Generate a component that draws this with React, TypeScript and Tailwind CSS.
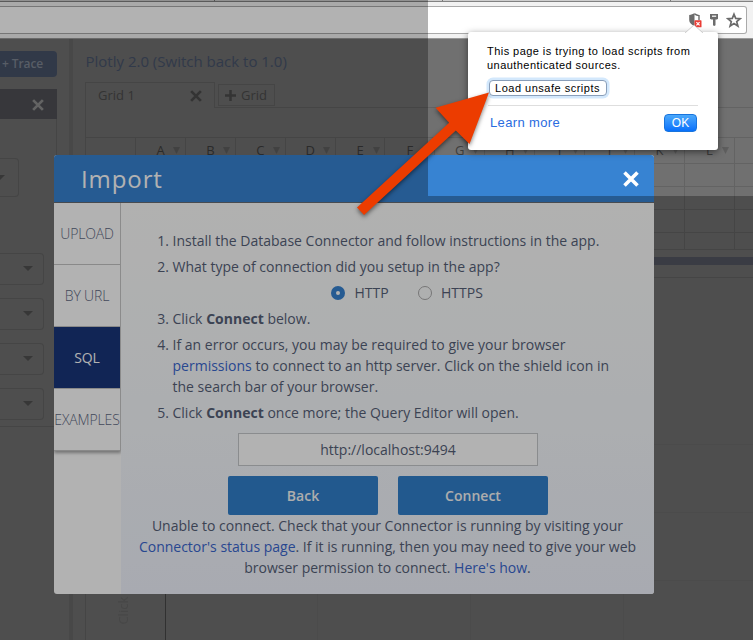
import React from 'react';

const columns = ['A', 'B', 'C', 'D', 'E', 'F', 'G', 'H', 'I', 'J', 'K', 'L'];

function Cross({ className }: { className: string }) {
  return (
    <svg viewBox="0 0 16 16" className={className} fill="none" stroke="currentColor" strokeWidth="3.6">
      <path d="M1.5 1.5 14.5 14.5M14.5 1.5 1.5 14.5" />
    </svg>
  );
}

function Caret() {
  return (
    <svg viewBox="0 0 10 5" className="h-[5px] w-[10px] text-[#4f4f4f]">
      <path d="M0 0h10L5 5z" fill="currentColor" />
    </svg>
  );
}

function BrowserBar() {
  return (
    <header className="flex h-[39px] shrink-0 flex-col border-b border-[#999] bg-[#f2f2f2]">
      <div className="flex h-[2px] shrink-0 border-b border-[#828282] bg-[#cfcfcf]">
        <div className="w-[215px] border-r border-[#777]" />
        <div className="w-[228px] border-r border-[#777]" />
        <div className="w-[228px] border-r border-[#777]" />
      </div>
      <div className="mt-[4px] mr-[6px] flex h-[28px] items-center justify-end rounded-r-[3px] border border-l-0 border-[#aaa] bg-white pr-[4px] text-[#6b6b6b]">
        <svg viewBox="0 0 14 16" className="mr-[7px] h-4 w-[14px]">
          <path d="M6.500 1C5 2.200 3.300 2.800 1.200 2.900V8c0 2.800 2.200 4.800 5.300 6z" fill="currentColor" />
          <path d="M6.500 1.900c1.300.9 2.800 1.500 4.500 1.700v4.700" fill="none" stroke="currentColor" strokeWidth="1.400" />
          <rect x="6.500" y="8.300" width="7" height="7" rx=".6" fill="#ea3c35" />
          <path d="m8.400 10.200 3.200 3.200m0-3.200-3.200 3.200" stroke="white" strokeWidth="1.200" />
        </svg>
        <svg viewBox="0 0 10 14" className="mr-[7px] h-[14px] w-[10px]">
          <path d="M1 1h8v4.800L8 6.600H6.500v5.600l-1.300.9L4 12.200V6.600H2.300L1 5.800z" fill="currentColor" />
          <path d="M3 3.200h4.200" stroke="white" strokeWidth="1.200" />
        </svg>
        <svg viewBox="0 0 16 16" className="h-4 w-4">
          <path d="m8 2.200 1.700 4.200 4.500.3-3.500 2.900 1.200 4.400L8 11.500 4.100 14l1.200-4.400-3.500-2.900 4.500-.3z" fill="none" stroke="currentColor" strokeWidth="1.700" />
        </svg>
      </div>
    </header>
  );
}

function TracePanel() {
  return (
    <aside className="flex w-[69px] shrink-0 flex-col pt-[12px]">
      <div className="flex h-[26px] w-[57px] items-center rounded-r bg-[#475268] pl-[2px] text-[12px] font-semibold tracking-[-0.1px] text-[#7e8693]">
        + Trace
      </div>
      <div className="mt-[12px] flex h-[30px] w-[57px] items-center justify-end bg-[#4f5055] pt-[2px] pr-[13px]">
        <Cross className="h-[12px] w-[12px] text-[#8f8f8f]" />
      </div>
      <div className="flex h-[308px] w-[57px] flex-col border-r border-b border-[#636363]">
        <div className="mt-[39px] flex h-[39px] w-[19px] items-center rounded-r border border-l-0 border-[#636363]">
          <div className="-ml-[5px]"><Caret /></div>
        </div>
        <div className="mt-[56px] flex flex-col gap-[13px]">
          {[1, 2, 3, 4].map((n) => (
            <div key={n} className="flex h-[32px] w-[44px] items-center justify-end rounded-r border border-l-0 border-[#636363] pr-[10px] pb-[2px]">
              <Caret />
            </div>
          ))}
        </div>
      </div>
    </aside>
  );
}

function Workspace() {
  return (
    <section className="flex min-w-0 flex-1 flex-col border-l-4 border-[#676767] pl-3">
      <div className="h-[43px] pt-[11px] pl-[0.5px] text-[15px] leading-[22px] whitespace-nowrap text-[#47536b]">
        Plotly 2.0 (Switch back to 1.0)
      </div>
      <div className="flex h-[26px] shrink-0 text-[13px] text-[#4b4b4b]">
        <div className="flex w-[130px] items-center justify-between border border-b-0 border-[#636363] pr-3 pl-3">
          <span>Grid 1</span>
          <Cross className="h-[12px] w-[12px]" />
        </div>
        <div className="flex flex-1 border-b border-[#636363] pt-[2px] pl-[3px]">
          <div className="flex h-[22px] w-[57px] items-center gap-[5px] border border-[#636363] pl-[6px]">
            <svg viewBox="0 0 11 11" className="h-[11px] w-[11px]" stroke="currentColor" strokeWidth="2.500">
              <path d="M5.500 0v11M0 5.500h11" />
            </svg>
            <span className="pt-px">Grid</span>
          </div>
        </div>
      </div>
      <div className="h-[29px] border-l border-[#636363]" />
      <div className="flex h-[113px] overflow-hidden border-t border-b border-l border-[#636363]">
        <div className="w-[50px] shrink-0 border-r border-[#636363]" />
        {[...columns, ''].map((letter, index) => (
          <div key={index} className="w-[49.9px] shrink-0 border-r border-[#636363]">
            <div className="flex h-[26px] items-center border-b border-[#636363] text-[13px] text-[#3d3d3d]">
              <span className="w-[49px] text-center">{letter}</span>
              <svg viewBox="0 0 7 7" className="-ml-[12px] h-[7px] w-[7px] shrink-0">
                <path d="M0 0h7L3.500 7z" fill="#5e5e5e" />
              </svg>
            </div>
            <div className="h-[23px] border-b border-[#636363]" />
            <div className="h-[23px] border-b border-[#636363]" />
            <div className="h-[23px] border-b border-[#636363]" />
          </div>
        ))}
      </div>
      <div className="mt-[7px] h-[8px] bg-[#535762]" />
      <div className="mt-[12px] flex flex-1 border-t border-l border-[#636363]">
        <div className="flex w-[80px] items-end justify-center border-r border-[#474747] pr-[5px] pb-[15px]">
          <span className="rotate-180 text-[13px] leading-none text-[#666] [writing-mode:vertical-rl]">Click to enter Y axis title</span>
        </div>
        <div className="flex flex-1 flex-col">
          <div className="h-[167px] border-b border-[#6c6c6c]" />
          <div className="h-[68px] border-b border-[#6c6c6c]" />
          <div className="h-[68px] border-b border-[#6c6c6c]" />
          <div className="flex flex-1">
            <div className="w-[152px] border-r border-[#6c6c6c]" />
            <div className="w-[153px] border-r border-[#6c6c6c]" />
            <div className="w-[153px] border-r border-[#6c6c6c]" />
          </div>
        </div>
      </div>
    </section>
  );
}

function ImportDialog() {
  const link = 'text-[#3a67cf]';
  return (
    <div className="absolute top-[155px] left-[54px] flex h-[439px] w-[600px] flex-col overflow-hidden rounded-[3px] bg-white">
      <div className="flex h-[48px] shrink-0 items-center justify-between border-b border-[#676d74] bg-[#3783d2] pr-[15px] pl-[27px] text-white">
        <h1 className="text-[24px] leading-none font-medium tracking-[0.9px]">Import</h1>
        <Cross className="h-[16px] w-[16px]" />
      </div>
      <div className="flex min-h-0 flex-1">
        <nav className="w-[67px] shrink-0">
          <div className="border-r border-[#c8c8c8] text-[14px] font-light tracking-[-0.15px] text-[#5f6a84] shadow-[0_2px_3px_rgba(0,0,0,0.35)]">
            <div className="flex h-[62px] items-center justify-center border-b border-[#c4c4c4]">UPLOAD</div>
            <div className="flex h-[62px] items-center justify-center border-b border-[#c4c4c4]">BY URL</div>
            <div className="flex h-[62px] items-center justify-center border-b border-[#c4c4c4] bg-[#19357a] font-normal text-white">SQL</div>
            <div className="flex h-[62px] items-center justify-center border-b border-[#c4c4c4]">EXAMPLES</div>
          </div>
        </nav>
        <main className="flex-1 bg-linear-to-b from-[#fefefd] via-[#f7fafd] to-[#f1f4fe] pt-[27px] text-[14px] leading-[21px] text-[#566178]">
          <ol className="ml-[51.5px] w-[450px] list-decimal tracking-[0.007px] whitespace-nowrap">
            <li className="mb-[5px]">Install the Database Connector and follow instructions in the app.</li>
            <li className="mb-[5px]">
              What type of connection did you setup in the app?
              <div className="mt-[5px] flex h-[21px] items-center pl-[158.5px]">
                <span className="flex h-[14px] w-[14px] items-center justify-center rounded-full bg-[#3783d2]">
                  <span className="h-[4px] w-[4px] rounded-full bg-white" />
                </span>
                <span className="ml-[9.5px] w-[63.5px]">HTTP</span>
                <span className="h-[14px] w-[14px] rounded-full border border-[#aaa]" />
                <span className="ml-[9px]">HTTPS</span>
              </div>
            </li>
            <li className="mb-[5px]">Click <b>Connect</b> below.</li>
            <li className="mb-[5px]">
              If an error occurs, you may be required to give your browser<br />
              <span className={link}>permissions</span> to connect to an http server. Click on the shield icon in<br />
              the search bar of your browser.
            </li>
            <li>Click <b>Connect</b> once more; the Query Editor will open.</li>
          </ol>
          <div className="mt-[10px] ml-[117px] flex h-[33px] w-[300px] items-center justify-center border border-[#c6c9cc] bg-white">
            http://localhost:9494
          </div>
          <div className="mt-[10px] ml-[107px] flex gap-5 font-semibold text-[#f8f8f8]">
            <div className="flex h-[39px] w-[150px] items-center justify-center rounded-[2px] bg-[#3180cc]">Back</div>
            <div className="flex h-[39px] w-[150px] items-center justify-center rounded-[2px] bg-[#3180cc]">Connect</div>
          </div>
          <p className="text-center whitespace-nowrap">
            Unable to connect. Check that your Connector is running by visiting your<br />
            <span className={link}>Connector's status page</span>. If it is running, then you may need to give your web<br />
            browser permission to connect. <span className={link}>Here's how</span>.
          </p>
        </main>
      </div>
    </div>
  );
}

function ScriptWarning() {
  return (
    <div className="absolute top-[32px] left-[468px] h-[118px] w-[250px] rounded-[3px] bg-white px-[19px] pt-[12px] font-['Liberation_Sans',Arial,sans-serif] text-black shadow-[0_2px_7px_rgba(0,0,0,0.5)]">
      <svg viewBox="0 0 18 9" className="absolute -top-[8px] left-[217px] h-[9px] w-[18px]">
        <path d="M0 9 9 1l9 8" fill="white" stroke="#bbb" strokeWidth=".7" />
      </svg>
      <p className="text-[11px] leading-[14px] tracking-[0.45px] whitespace-nowrap">
        This page is trying to load scripts from<br />unauthenticated sources.
      </p>
      <button className="mt-[8px] ml-[1.5px] flex h-[16px] w-[118px] items-center justify-center rounded-[4px] border border-[#899eb9] bg-white text-[11px] tracking-[0.5px] whitespace-nowrap shadow-[0_0_0_2.5px_#d3e8fc]">
        Load unsafe scripts
      </button>
      <div className="mt-[9px] ml-[1px] h-px w-[210px] bg-[#dedede]" />
      <div className="mt-[7px] flex items-center justify-between pr-[2px] pl-[3px]">
        <span className="text-[13px] tracking-[0.35px] text-[#2a6ce0]">Learn more</span>
        <button className="flex h-[18px] w-[33px] items-center justify-center rounded-[4px] border border-[#1874dd] bg-linear-to-b from-[#4aa8fb] to-[#0670fb] text-[12px] leading-none text-white">OK</button>
      </div>
    </div>
  );
}

export default function App() {
  return (
    <div className="relative flex h-[640px] w-[753px] flex-col overflow-hidden bg-[#707070] font-['Open_Sans',sans-serif]">
      <BrowserBar />
      <div className="flex min-h-0 flex-1">
        <TracePanel />
        <Workspace />
      </div>
      <ImportDialog />
      {/* Spotlight: everything outside the top-right region is dimmed */}
      <div className="absolute top-0 left-[428px] h-[196px] w-[325px] shadow-[0_0_0_1000px_rgba(0,0,0,0.3)]" />
      <ScriptWarning />
      <svg viewBox="0 0 753 640" className="pointer-events-none absolute inset-0 h-full w-full">
        <path d="M489 92.500 435.500 107.700l13.700 15L357 207.500l7 7.500 91.800-84.500 13.700 13.500z" fill="#ec3c00" className="[filter:drop-shadow(0_2px_2px_rgba(0,0,0,0.5))]" />
      </svg>
    </div>
  );
}
